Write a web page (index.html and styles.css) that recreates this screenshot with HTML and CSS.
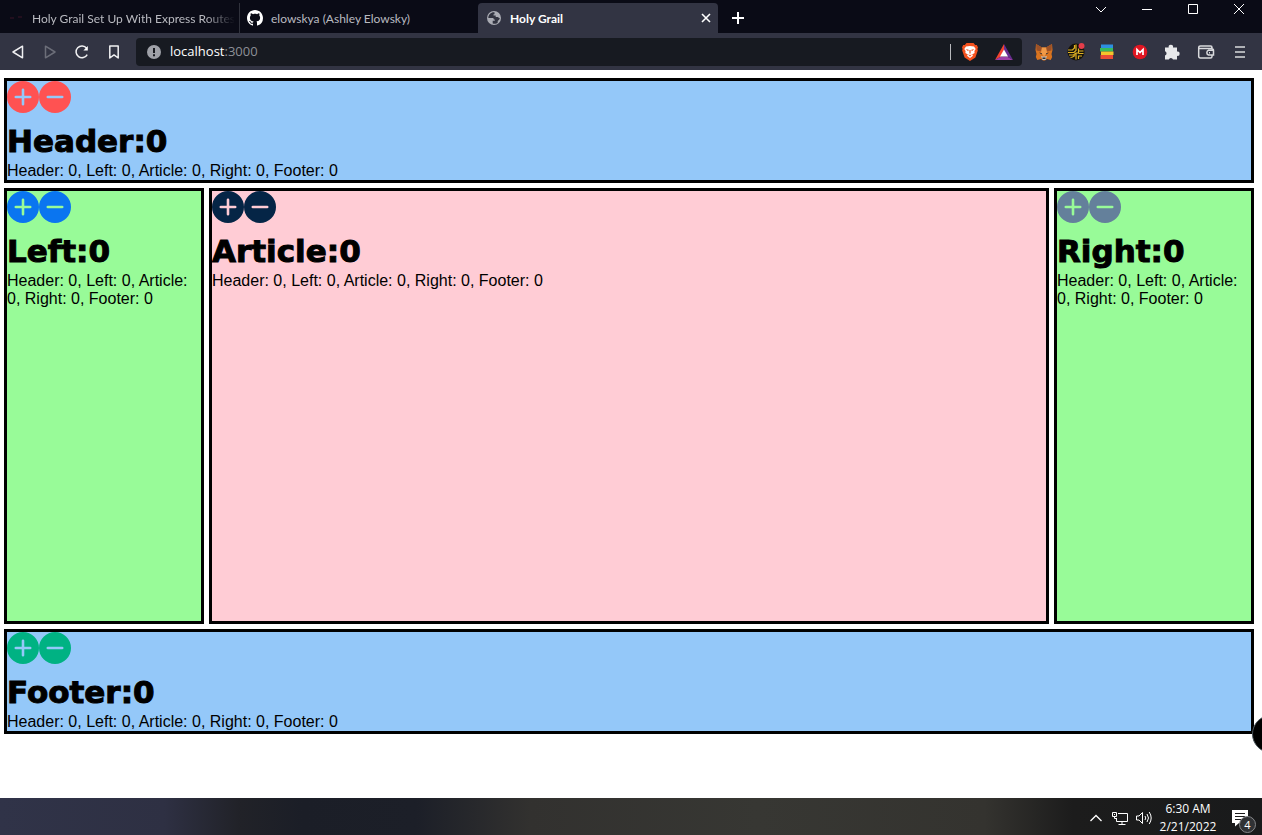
FILE: index.html
```html
<!DOCTYPE html>
<html lang="en">
<head>
<meta charset="utf-8">
<title>Holy Grail</title>
<link rel="stylesheet" href="styles.css">
</head>
<body>
<svg class="defs" aria-hidden="true">
  <symbol id="plus" viewBox="0 0 32 32"><path fill="currentColor" fill-rule="evenodd" d="M16 0a16 16 0 1 0 0 32a16 16 0 1 0 0-32zM16 7.500q1.300 0 1.300 1.300v5.900h5.900q1.300 0 1.300 1.300t-1.300 1.300h-5.900v5.900q0 1.300-1.300 1.300t-1.300-1.300v-5.900H8.800q-1.300 0-1.300-1.300t1.300-1.300h5.900V8.800q0-1.300 1.300-1.300z"/></symbol>
  <symbol id="minus" viewBox="0 0 32 32"><path fill="currentColor" fill-rule="evenodd" d="M16 0a16 16 0 1 0 0 32a16 16 0 1 0 0-32zM8.800 14.700h14.400q1.300 0 1.300 1.300t-1.300 1.300H8.800q-1.300 0-1.300-1.300t1.300-1.300z"/></symbol>
</svg>

<header class="tabstrip">
  <nav class="tabs">
    <button class="tab tab-first"><svg class="icon" viewBox="0 0 16 16"><path d="M2 8h4M10 7h4" stroke="#3a1426"/></svg><span class="tab-title fade">Holy Grail Set Up With Express Routes</span></button>
    <button class="tab"><svg class="icon" viewBox="0 0 16 16"><path fill="#fff" d="M8 0C3.580 0 0 3.580 0 8c0 3.540 2.290 6.530 5.470 7.590.4.070.550-.170.550-.380 0-.190-.010-.820-.010-1.490-2.010.370-2.530-.490-2.690-.940-.090-.230-.480-.940-.820-1.130-.280-.150-.680-.520-.010-.530.630-.010 1.080.580 1.230.820.720 1.210 1.870.870 2.330.660.070-.520.280-.870.510-1.070-1.780-.200-3.640-.890-3.640-3.950 0-.870.310-1.590.820-2.150-.080-.200-.360-1.020.080-2.120 0 0 .670-.210 2.200.820.640-.180 1.320-.270 2-.270s1.360.090 2 .270c1.530-1.040 2.200-.820 2.200-.820.440 1.100.160 1.920.080 2.120.510.560.820 1.270.820 2.150 0 3.070-1.870 3.750-3.650 3.950.290.250.540.730.540 1.480 0 1.070-.010 1.930-.010 2.200 0 .210.150.460.550.380A8 8 0 0 0 16 8c0-4.420-3.580-8-8-8z"/></svg><span class="tab-title">elowskya (Ashley Elowsky)</span></button>
    <button class="tab active"><svg class="icon" viewBox="0 0 16 16"><circle cx="8" cy="8" r="7" fill="#aaacb4"/><path fill="#313340" d="M8.500 2.300C5 2 2.300 4.800 2.300 8h4.200c1 0 1.300.7 1.300 1.500h1v1.200H6.700v2.800c2.500.8 4.300-.1 5.100-1.100l-.1-1.500c1.400-.5 1.600-1.600 2.200-2.600-1.200 0-1.400-.5-1.800-1.200H9.700V5.500H7.500V4.200h1z"/></svg><span class="tab-title">Holy Grail</span><svg class="close" viewBox="0 0 10 10"><path d="M1 1l8 8M9 1L1 9" stroke="#fff" stroke-width="1.600"/></svg></button>
    <button class="newtab" aria-label="New tab"><svg viewBox="0 0 12 12"><path d="M6 0v12M0 6h12" stroke="#fff" stroke-width="2"/></svg></button>
  </nav>
  <div class="window-controls">
    <button aria-label="Tab search"><svg viewBox="0 0 12 12"><path d="M1 4l5 5 5-5"/></svg></button>
    <button aria-label="Minimize"><svg viewBox="0 0 12 12"><path d="M1 6.500h10"/></svg></button>
    <button aria-label="Maximize"><svg viewBox="0 0 12 12"><path d="M1.500 1.500h9v9h-9z"/></svg></button>
    <button aria-label="Close"><svg viewBox="0 0 12 12"><path d="M1 1l10 10M11 1L1 11"/></svg></button>
  </div>
</header>

<div class="toolbar">
  <div class="nav-buttons">
    <button aria-label="Back"><svg viewBox="0 0 16 16"><path d="M12.500 2.200v11.600L3 8z"/></svg></button>
    <button class="disabled" aria-label="Forward"><svg viewBox="0 0 16 16"><path d="M3.500 2.200v11.600L13 8z"/></svg></button>
    <button aria-label="Reload"><svg viewBox="0 0 16 16"><path d="M13.200 10.600A5.900 5.900 0 1 1 12.600 4.200"/><path d="M13.800 2v4.600H9.400z" fill="#fff" stroke="none"/></svg></button>
    <button aria-label="Bookmark"><svg viewBox="0 0 16 16"><path d="M3.800 2h8.400v12L8 10.900 3.800 14z"/></svg></button>
  </div>
  <div class="address">
    <svg class="info" viewBox="0 0 14 14"><circle cx="7" cy="7" r="7" fill="#9fa1a8"/><path d="M7 3v5M7 9.300v2" stroke="#17191f" stroke-width="2"/></svg>
    <div class="url" role="textbox" aria-label="Address"><b>localhost</b>:3000</div>
    <span class="divider"></span>
    <button aria-label="Brave Shields"><svg viewBox="0 0 18 18"><path fill="#f4511e" d="M5.500 0h7l1.700 1.900 1.600.1 1.200 2.600-.6 1.500.4 1.400-2.400 7L9 18l-5.400-3.500-2.400-7 .4-1.400L1 4.600 2.200 2l1.600-.1z"/><path fill="#fff" d="M5 3.400L9 3l4 .4 1.700 2.600-1.300 1.900.2 2.100-2.500 1.500.9 1.200L9 15.100l-3-2.400.9-1.200L4.400 10l.2-2.100L3.300 6z"/><path fill="#f4511e" d="M4.700 6l3 .8-.5 1.400zM13.300 6l-3 .8.500 1.400zM8.400 7h1.200v3.200L9 10.800l-.6-.6zM7 11.400l2 .7 2-.7-2 2z"/></svg></button>
    <button class="bat" aria-label="Rewards"><svg viewBox="0 0 18 18"><path fill="#f4432f" d="M9 1L0 17l6-3.500L9 7z"/><path fill="#662d91" d="M9 1l9 16-6-3.500L9 7z"/><path fill="#9e3fa8" d="M0 17h18l-6-3.500H6z"/><path fill="#fff" d="M9 6.500l4 7H5z"/></svg></button>
  </div>
  <div class="extensions">
    <button aria-label="Fox wallet"><svg viewBox="0 0 18 18"><path fill="#d9731f" d="M1 1l6 3.500h4L17 1l.5 6-1 4 .7 3-1.500 3-3.700-1-2 1.500H8L6 16l-3.700 1-1.500-3 .7-3-1-4z"/><path fill="#9b5128" d="M1 1l6 3.500-.7 4-4.800-1zM17 1l-6 3.500.7 4 4.800-1z"/><path fill="#f09a48" d="M7 4.500h4l1 5-3 4-3-4z"/><path fill="#c9bfb6" d="M6 13l2 .5h2l2-.5-1.500 4h-3z"/><path fill="#2b3038" d="M4 9.500l3 .8-.4 1.200zM14 9.500l-3 .8.400 1.200zM7.500 14.500h3v1.500h-3z"/></svg></button>
    <button aria-label="Key"><svg viewBox="0 0 18 18"><circle cx="9" cy="9" r="8.500" fill="#15130c"/><path fill="none" stroke="#e2b323" stroke-width="1.200" d="M1 7h4.500L7.500 5V2M1 9.500h6L9 7.500V1.500M2 12h4.500L9 10M3.500 14.500L5.500 14 8 12.500M9 16.500V10h2.500V5.500M11.500 8h5M11.500 10.500h5M11.500 16v-3H15"/><circle cx="14.500" cy="3" r="3" fill="#e33d4a"/></svg></button>
    <button aria-label="Stack"><svg viewBox="0 0 18 18"><path fill="#2d8fe0" d="M2 1.500h12v4H2z"/><path fill="#36ba5c" d="M1 5h13v3.500H1z"/><path fill="#f3c42b" d="M2 8.500h12.500V12H2z"/><path fill="#e94b35" d="M1.500 12H14v4H1.500z"/></svg></button>
    <button aria-label="Mega"><svg viewBox="0 0 18 18"><circle cx="9" cy="9" r="7.300" fill="#e01622"/><path d="M6 12V6.500l3 3 3-3V12" fill="none" stroke="#fff" stroke-width="1.700"/></svg></button>
    <button aria-label="Extensions"><svg viewBox="0 0 18 18"><path fill="#e8e9eb" d="M2 4.500h3.700a2.200 2.200 0 1 1 4.300 0h4v4a2.200 2.200 0 1 1 0 4.300v3.700h-4a2.200 2.200 0 0 0-4.200 0H2v-4a2.200 2.200 0 0 0 0-4.200z"/></svg></button>
    <button class="wallet" aria-label="Wallet"><svg viewBox="0 0 18 18"><path fill="none" stroke="#d9dadd" stroke-width="1.500" d="M15 6V4.500Q15 3 13.500 3H3.500Q1.700 3 1.700 4.700v8.600Q1.700 15 3.500 15h10q1.500 0 1.500-1.500V12M2 5.500h12q2.500 0 2.500 2V12h-5a2.500 2.500 0 0 1 0-4.700h5M12 9.700h1"/></svg></button>
    <button aria-label="Menu"><svg viewBox="0 0 18 18"><path stroke="#d9dadd" stroke-width="1.500" d="M4 4h10M4 9h10M4 14h10"/></svg></button>
  </div>
</div>

<main class="page">
  <section class="box blue coral">
    <div class="controls"><button aria-label="Add header"><svg><use href="#plus"/></svg></button><button aria-label="Subtract header"><svg><use href="#minus"/></svg></button></div>
    <h1>Header:0</h1>
    <p>Header: 0, Left: 0, Article: 0, Right: 0, Footer: 0</p>
  </section>
  <div class="columns">
    <section class="box green azure">
      <div class="controls"><button aria-label="Add left"><svg><use href="#plus"/></svg></button><button aria-label="Subtract left"><svg><use href="#minus"/></svg></button></div>
      <h1>Left:0</h1>
      <p>Header: 0, Left: 0, Article: 0, Right: 0, Footer: 0</p>
    </section>
    <section class="box pink navy">
      <div class="controls"><button aria-label="Add article"><svg><use href="#plus"/></svg></button><button aria-label="Subtract article"><svg><use href="#minus"/></svg></button></div>
      <h1>Article:0</h1>
      <p>Header: 0, Left: 0, Article: 0, Right: 0, Footer: 0</p>
    </section>
    <section class="box green slate">
      <div class="controls"><button aria-label="Add right"><svg><use href="#plus"/></svg></button><button aria-label="Subtract right"><svg><use href="#minus"/></svg></button></div>
      <h1>Right:0</h1>
      <p>Header: 0, Left: 0, Article: 0, Right: 0, Footer: 0</p>
    </section>
  </div>
  <section class="box blue emerald">
    <div class="controls"><button aria-label="Add footer"><svg><use href="#plus"/></svg></button><button aria-label="Subtract footer"><svg><use href="#minus"/></svg></button></div>
    <h1>Footer:0</h1>
    <p>Header: 0, Left: 0, Article: 0, Right: 0, Footer: 0</p>
  </section>
  <div class="bubble"></div>
</main>

<footer class="taskbar">
  <button aria-label="Hidden icons"><svg class="tray" viewBox="0 0 16 16"><path stroke-width="1.300" d="M2.500 11L8 5.500 13.500 11"/></svg></button>
  <button aria-label="Network"><svg class="tray" viewBox="0 0 16 16"><path d="M6 3.500h9.500v8H4.500V8M10 11.500v3M6.500 14.500h7M.5 2.500h4v4h-4zM2.500 6.500v2h2M2 4.500h1"/></svg></button>
  <button aria-label="Volume"><svg class="tray" viewBox="0 0 16 16"><path d="M.5 6H3l3.500-3.500v11L3 10H.5zM9 6q1.500 2 0 4M11 4q3 4 0 8M13.200 2q4 6 0 12"/></svg></button>
  <time class="clock"><span>6:30 AM</span><span>2/21/2022</span></time>
  <button class="notices" aria-label="Notifications"><svg viewBox="0 0 18 18"><path fill="#fff" d="M1 1h16v13H8l-4 3.500V14H1z"/><path stroke="#1b1b1b" d="M4 4.500h10M4 7.500h10M4 10.500h7"/></svg><span class="badge">4</span></button>
</footer>
</body>
</html>
```
FILE: styles.css
```css
* { box-sizing: border-box; }
body {
  margin: 0;
  min-height: 100vh;
  display: flex;
  flex-direction: column;
  background: #fff;
  overflow: hidden;
  font-family: "Open Sans", "Noto Sans", sans-serif;
  font-size: 12px;
}
button {
  display: flex;
  align-items: center;
  justify-content: center;
  margin: 0;
  padding: 0;
  border: 0;
  background: none;
  color: inherit;
  font: inherit;
}
svg { display: block; flex: none; }
.defs { position: absolute; width: 0; height: 0; }

.tabstrip {
  display: flex;
  justify-content: space-between;
  height: 33px;
  background: #0a0b16;
  color: #b9bac0;
  font-family: Lato, "Open Sans", sans-serif;
}
.tabs { display: flex; padding-top: 3px; }
.tab {
  width: 239px;
  justify-content: flex-start;
  gap: 8px;
  padding: 0 6px 0 8px;
}
.tab-first { width: 240px; box-shadow: inset -1px 0 #30323c; }
.tab-first + .tab { width: 238px; padding-left: 7px; }
.tab.active {
  width: 240px;
  padding-right: 7px;
  border-radius: 4px 4px 0 0;
  background: #323443;
  color: #fff;
  font-weight: 700;
}
.tab-title { flex: 1; text-align: left; white-space: nowrap; }
.fade {
  -webkit-mask-image: linear-gradient(to right, #000 85%, transparent);
  mask-image: linear-gradient(to right, #000 85%, transparent);
}
.icon { width: 16px; height: 16px; }
.close { width: 10px; height: 10px; }
.newtab { width: 40px; }
.newtab svg { width: 12px; height: 12px; }
.window-controls { display: flex; align-items: flex-start; }
.window-controls button { width: 46px; height: 18px; }
.window-controls svg { width: 12px; height: 12px; fill: none; stroke: #fff; }

.toolbar {
  display: flex;
  align-items: center;
  height: 37px;
  padding: 0 6px 0 2px;
  background: #323443;
}
.nav-buttons { display: flex; margin-right: 6px; }
.nav-buttons button { width: 32px; }
.nav-buttons svg { width: 16px; height: 16px; fill: none; stroke: #f0f0f2; stroke-width: 1.5px; stroke-linejoin: round; }
.nav-buttons .disabled svg { stroke: #6c6e79; }
.address {
  flex: 1;
  display: flex;
  align-items: center;
  height: 28px;
  padding: 0 9px 0 11px;
  border-radius: 4px;
  background: #171a21;
}
.info { width: 14px; height: 14px; margin-right: 9px; }
.url { flex: 1; padding-bottom: 2px; color: #8d9097; font-size: 13px; }
.url b { color: #fff; font-weight: 400; }
.divider { width: 1px; height: 16px; margin-right: 10px; background: #b8b9bd; }
.address button svg { width: 18px; height: 18px; }
.bat { margin-left: 16px; }
.extensions { display: flex; margin-left: 6px; }
.extensions button { width: 32px; }
.extensions .wallet { width: 36px; }
.extensions svg { width: 18px; height: 18px; }

.page {
  flex: 1;
  display: flex;
  flex-direction: column;
  gap: 5px;
  position: relative;
  padding: 8px 8px 64px 4px;
  overflow: hidden;
  color: #000;
  font-family: "Liberation Sans", Arial, sans-serif;
  font-size: 16px;
  line-height: 18px;
}
.box { border: 3px solid #000; }
.controls { display: flex; height: 40px; align-items: flex-start; }
.controls svg { width: 32px; height: 32px; }
.box h1 {
  margin: 0;
  font-family: "Arial Black", "DejaVu Sans", sans-serif;
  font-size: 31px;
  font-weight: 900;
  line-height: 41px;
  -webkit-text-stroke: 1px #000;
}
.box p { margin: 0; }
.columns {
  flex: 1;
  display: grid;
  grid-template-columns: 200px 1fr 200px;
  gap: 5px;
}
.blue { background: #94c8f9; }
.green { background: #98fb98; }
.pink { background: #ffccd5; }
.coral button { color: #ff5252; }
.azure button { color: #0a75f0; }
.navy button { color: #052546; }
.slate button { color: #64809b; }
.emerald button { color: #00b283; }
.bubble {
  position: absolute;
  right: -28px;
  bottom: 45px;
  width: 38px;
  height: 38px;
  border: 1px solid #49545a;
  border-radius: 50%;
  background: #000;
}

.taskbar {
  display: flex;
  align-items: center;
  justify-content: flex-end;
  height: 37px;
  padding: 2px 6px 0 0;
  background: linear-gradient(to right, #303348 0%, #2e3043 13%, #212228 19%, #1b1e27 24%, #1c1f28 33%, #32312f 42%, #373733 60%, #34332f 78%, #1c1c1c 85%, #191a1b 100%);
  color: #fff;
}
.taskbar button { width: 24px; }
.tray { width: 16px; height: 16px; fill: none; stroke: #fff; }
.clock { display: flex; flex-direction: column; width: 64px; text-align: center; line-height: 18px; }
.taskbar .notices { position: relative; width: 32px; margin-left: 4px; justify-content: flex-start; padding-left: 7px; }
.notices svg { width: 18px; height: 18px; }
.badge {
  position: absolute;
  right: 0;
  top: 7px;
  width: 17px;
  height: 17px;
  border: 1px solid #85878a;
  border-radius: 50%;
  background: #303235;
  font-size: 11px;
  line-height: 15px;
}
```
